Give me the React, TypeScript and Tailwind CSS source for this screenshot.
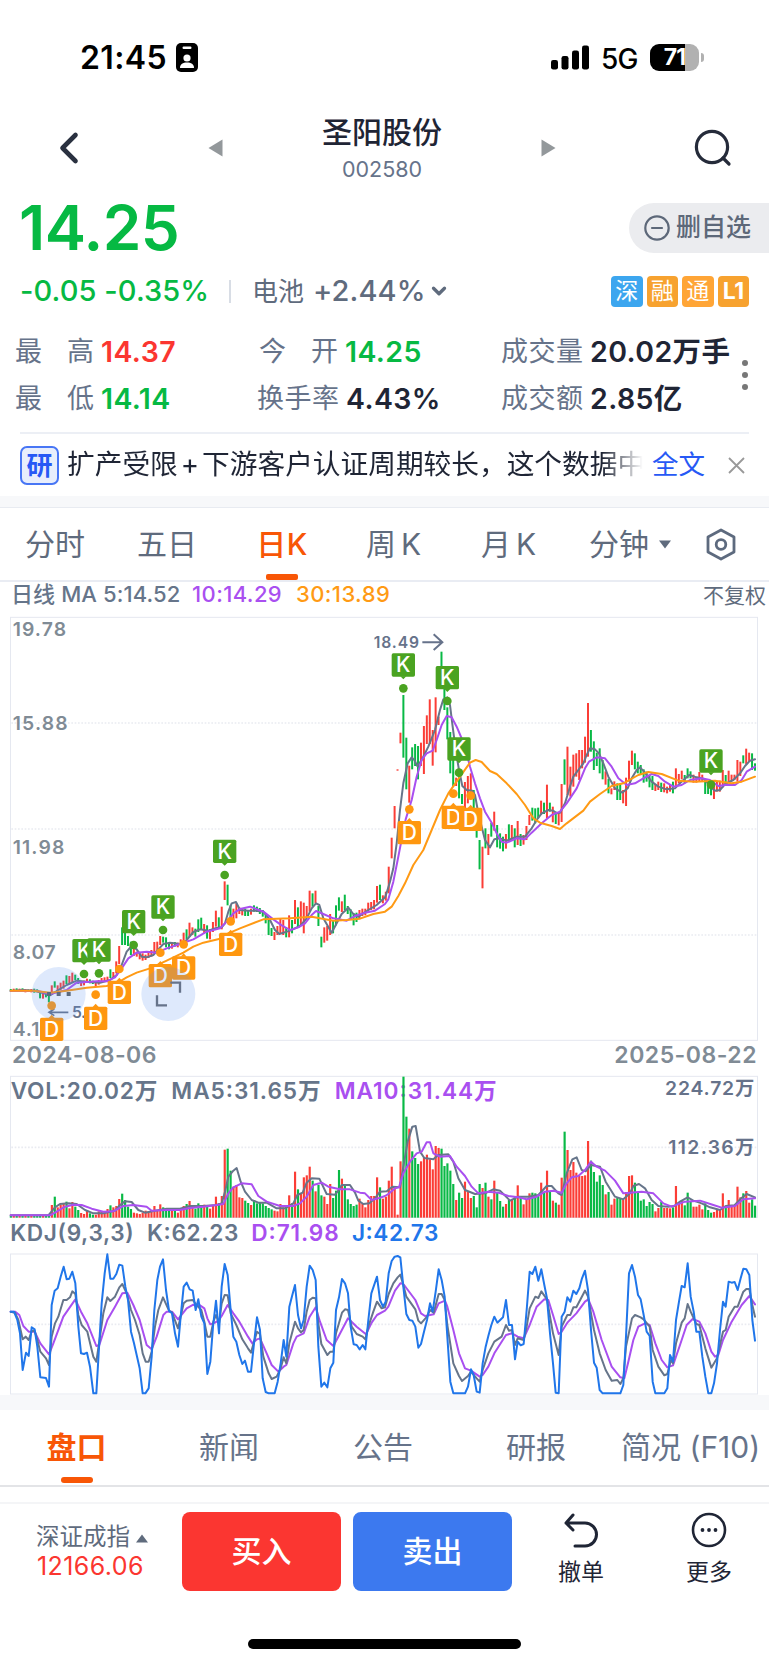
import { ChevronDown } from "lucide-react";

type Tone = "r" | "g";

const SLATE = "#66758a";
const PURPLE = "#a94ff0";
const ORANGE = "#ff9a14";
const RED = "#fb3d36";
const GREEN = "#08b945";
const BLUE = "#2076ea";

// chart units are 1/3 px, the series are stored in two halves
const HALF = 1155;
const STEP = 8.79;
const FIRST = 32.3;

const barX = (i: number) => FIRST + i * STEP;

const joinHalves = (
  left: string,
  right: string,
  leftDy = 0
) => {
  const shift = (src: string, dx: number, dy: number) =>
    src.split(" ").map((p) => {
      const [x, y] = p.split(",").map(Number);
      return `${x + dx},${y + dy}`;
    });
  return [
    ...shift(left, 0, leftDy),
    ...shift(right, HALF, 0),
  ].join(" ");
};

const CANDLES =
  "g1137-1145 r1136-1145 g1135-1146 r1136-1144 g1135-1145 r1137-1147 g1138-1146 r1137-1147 g1136-1148 g1138-1146 " +
  "g1145-1165 r1150-1166 g1146-1162 g1150-1177 r1126-1155 g1114-1133 r1126-1148 r1118-1140 r1112-1136 g1096-1122 " +
  "r1098-1124 r1088-1116 g1094-1110 g1104-1122 r1115-1128 r1112-1126 r1106-1118 g1108-1120 g1112-1122 r1116-1130 " +
  "r1110-1124 r1104-1118 r1102-1114 r1100-1116 g1078-1104 r1086-1104 r1054-1090 r1008-1062 g952-1005 g960-1005 " +
  "g978-1008 g995-1035 r1010-1038 r1025-1040 r1030-1048 r1030-1052 r1034-1050 r1026-1044 r1020-1040 r996-1030 " +
  "r995-1020 r978-1005 g980-998 g982-1012 g1000-1018 r996-1016 g996-1010 r998-1012 r988-1006 r968-995 " +
  "g958-988 r938-980 r952-975 g956-980 g928-966 g923-960 r942-970 g946-986 r958-988 r936-966 " +
  "r902-950 g922-956 r890-958 r814-870 g824-886 g886-925 r896-930 r880-925 r892-912 r894-916 " +
  "g896-918 g900-918 r896-914 g886-905 g890-906 g894-912 g900-920 g912-940 g930-975 g954-978 " +
  "r966-990 r948-975 r924-970 r930-975 g952-982 r916-982 g930-970 r870-942 g892-952 r874-945 " +
  "r878-970 r888-922 r842-905 g850-890 r842-880 g888-948 g980-1012 r952-998 r948-992 r912-975 " +
  "g930-970 g886-946 g862-902 r874-906 g854-900 g888-912 g898-928 g910-946 g908-936 r900-926 " +
  "r896-918 r896-916 r878-904 r876-900 r870-898 r828-878 g824-870 r856-880 r845-872 r770-850 " +
  "r683-745 r588-655 r478-482 r368-400 g255-443 g383-538 r467-578 g412-478 g402-468 g408-508 " +
  "r398-468 r348-492 r316-402 r268-402 r360-467 r262-427 r320-345 g125-200 g215-300 g292-388 " +
  "g366-490 g430-530 r503-528 g490-565 g552-582 r516-600 r498-580 r490-560 g540-640 g600-683 " +
  "g690-778 r710-835 g655-715 r672-735 g638-680 r605-662 g645-712 g670-716 g680-724 r672-716 " +
  "g643-695 r645-690 g655-712 r633-705 g672-708 r675-704 r648-690 r615-645 g593-632 g595-640 " +
  "g593-625 r572-615 g578-612 r524-625 g578-605 r590-637 g605-642 r610-646 r522-636 g448-524 " +
  "r410-555 r470-560 r434-530 r430-500 r420-510 r420-475 r380-458 r279-440 g360-425 g394-480 " +
  "g428-468 g415-490 g450-508 r484-524 g506-550 r535-553 r514-540 g520-570 g520-570 r540-580 " +
  "r503-588 r452-515 r422-465 g430-478 g455-490 g465-492 g478-518 g485-515 g495-532 g498-540 " +
  "r522-543 r515-540 g518-546 r520-547 r530-550 r525-545 g515-550 r475-530 r492-520 r482-508 " +
  "g495-520 g475-505 g484-505 r494-518 r500-518 r486-515 r494-515 g510-552 g515-552 g530-556 " +
  "r525-567 r515-545 r512-545 r480-532 g495-520 r482-515 r494-512 r494-510 r450-515 r455-498 " +
  "g436-460 r416-462 r428-455 g430-480 g460-482";

const candles = CANDLES.split(" ").map((c, i) => {
  const [top, bottom] = c.slice(1).split("-").map(Number);
  return { x: barX(i), tone: c[0] as Tone, top, bottom };
});

const volumeTops = [
  437, 438, 437, 438, 438, 437, 438, 438, 437, 437, 435, 437, 436, 435, 405, 380, 412, 405, 400, 395,
  415, 396, 410, 420, 429, 432, 420, 430, 434, 434, 424, 424, 427, 417, 406, 412, 408, 387, 371, 390,
  410, 417, 428, 430, 432, 428, 422, 424, 424, 408, 420, 403, 412, 418, 422, 422, 416, 428, 416, 408,
  402, 393, 412, 416, 400, 408, 404, 410, 416, 405, 380, 400, 378, 239, 236, 302, 350, 345, 382, 384,
  392, 399, 405, 390, 400, 398, 400, 408, 414, 418, 422, 424, 402, 412, 410, 376, 400, 305, 358, 370,
  322, 316, 290, 332, 364, 345, 376, 380, 402, 342, 384, 362, 300, 326, 345, 388, 402, 408, 404, 386,
  400, 412, 390, 378, 378, 322, 352, 386, 380, 332, 290, 352, 434, 274, 20, 140, 176, 244, 264, 282,
  274, 262, 254, 268, 298, 228, 234, 236, 288, 280, 302, 342, 390, 368, 384, 335, 366, 384, 378, 412,
  342, 354, 338, 380, 388, 332, 368, 393, 410, 402, 390, 390, 382, 346, 380, 403, 390, 370, 368, 370,
  378, 338, 366, 302, 366, 392, 398, 404, 323, 185, 240, 300, 276, 308, 318, 318, 316, 213, 272, 306,
  335, 316, 345, 373, 366, 404, 386, 384, 386, 390, 366, 318, 316, 338, 366, 392, 388, 408, 396, 402,
  424, 414, 396, 414, 414, 415, 412, 348, 396, 390, 406, 368, 396, 410, 410, 404, 418, 400, 420, 428,
  426, 420, 420, 370, 408, 390, 406, 406, 350, 382, 370, 363, 398, 388, 407,
];

const ma5 = joinHalves(
  "32,453 70,450 105,453 125,458 150,466 175,450 200,435 230,422 260,425 300,428 330,420 350,405 365,375 380,335 395,318 410,328 425,350 440,352 460,345 475,328 490,312 510,308 540,312 560,300 580,276 600,268 625,272 645,265 665,262 675,250 685,215 695,190 708,186 720,210 745,212 770,212 790,215 810,240 825,270 838,282 870,272 900,258 920,235 935,205 948,190 958,195 970,235 995,278 1010,250 1025,222 1045,203 1060,222 1075,230 1105,210 1130,195 1155,172",
  "5,848 15,815 25,775 35,700 45,600 55,520 68,460 80,442 88,450 97,468 110,450 130,410 150,360 165,300 175,268 187,262 195,285 203,350 212,420 222,480 232,528 245,540 262,542 270,555 280,610 290,650 300,690 315,712 328,688 345,685 365,692 395,680 420,680 440,655 455,630 470,610 490,600 505,602 515,610 525,608 540,580 555,530 565,500 580,480 595,460 605,435 615,415 630,418 642,430 655,460 670,500 690,535 712,548 728,535 740,505 755,480 765,472 780,488 800,515 820,530 845,538 870,535 890,515 912,495 935,502 960,508 975,530 990,542 1005,540 1020,522 1045,510 1065,490 1080,468 1095,452 1110,448",
  690
);

const ma10 = joinHalves(
  "32,453 110,452 150,462 200,450 230,428 290,424 320,424 345,412 365,385 385,355 410,338 440,335 470,338 500,325 540,312 580,298 620,275 660,265 680,245 700,220 720,207 750,200 790,215 820,238 845,256 870,270 895,262 915,250 935,225 948,213 970,222 1000,235 1040,242 1065,228 1095,218 1125,212 1155,192",
  "10,868 25,815 38,750 50,688 62,628 80,570 95,500 110,450 125,430 143,422 155,390 170,345 185,318 200,322 215,350 232,390 245,430 255,470 270,520 285,565 300,605 320,638 335,670 350,695 365,698 395,685 420,688 440,668 470,640 500,615 525,605 545,580 575,535 590,500 600,475 612,455 635,442 660,445 680,470 700,505 725,525 750,520 775,505 800,492 820,498 840,515 865,530 890,525 915,510 950,505 975,510 1000,528 1020,525 1050,525 1070,510 1085,485 1110,470",
  690
);

const ma30 = joinHalves(
  "32,452 100,452 150,458 200,452 260,443 320,438 350,430 380,412 410,398 450,385 500,362 550,338 580,320 610,308 660,296 685,280 720,265 790,238 870,235 935,230 1000,242 1040,240 1080,236 1120,222 1155,215",
  "20,890 40,858 60,820 85,765 115,720 140,660 165,600 190,550 225,500 255,458 272,450 290,456 315,483 335,492 365,520 395,552 420,585 445,625 465,638 500,648 525,657 545,640 595,602 615,575 645,552 680,528 715,520 760,495 790,486 830,492 880,512 930,515 990,512 1040,520 1070,515 1110,500",
  690
);

const volMa5 = joinHalves(
  "32,436 145,436 165,412 180,402 205,400 230,402 255,420 280,430 310,430 345,422 360,405 375,394 395,396 415,420 435,428 465,422 500,416 540,416 570,408 610,408 650,405 665,400 675,365 685,320 700,302 710,294 722,335 735,365 755,390 775,398 800,398 830,415 855,415 880,400 892,375 908,368 920,338 935,325 958,326 980,372 1005,374 1015,362 1025,345 1050,345 1065,368 1075,392 1090,402 1108,400 1125,385 1140,365 1160,364",
  "10,360 22,350 45,352 55,290 68,215 82,170 92,168 105,245 118,264 145,268 160,255 190,253 205,275 220,325 240,360 270,372 300,370 325,358 345,362 375,392 400,380 430,380 460,375 485,348 500,348 520,370 530,375 545,310 562,268 575,262 590,300 602,304 618,285 645,290 662,335 690,380 715,388 735,370 745,348 762,342 780,355 800,390 820,408 850,410 868,408 885,395 908,382 925,392 950,400 975,412 1005,420 1022,408 1048,406 1065,388 1085,372 1110,382"
);

const volMa10 = joinHalves(
  "32,436 150,436 170,425 195,410 220,404 245,405 275,416 310,425 340,424 370,408 400,405 440,410 455,422 500,420 540,420 570,414 610,410 650,405 670,402 685,370 700,352 725,340 755,343 775,378 800,395 840,408 880,408 900,400 920,380 940,345 965,338 985,350 1020,358 1050,358 1080,368 1095,370 1115,390 1135,385 1155,378",
  "10,372 30,355 42,352 55,310 75,275 95,250 110,245 125,217 135,217 145,250 165,260 195,258 215,290 240,318 260,350 280,370 310,365 340,368 370,378 400,382 425,388 455,380 480,365 505,362 530,368 545,340 560,322 580,318 600,300 618,275 635,290 660,302 690,332 715,370 735,368 770,365 805,370 835,400 860,410 900,395 945,392 985,405 1010,413 1050,408 1075,388 1110,385"
);

const kdjJ = joinHalves(
  "32,725 42,725 52,750 60,790 68,900 78,848 86,858 95,772 104,778 112,830 121,922 138,924 147,950 155,705 164,662 173,655 182,620 191,590 200,628 208,626 217,605 226,640 235,770 243,850 252,852 261,848 270,890 280,970 289,970 296,850 305,700 314,610 322,553 331,626 340,626 349,612 358,584 367,587 376,650 384,690 393,785 402,820 419,895 428,970 436,970 446,955 455,860 463,720 472,630 480,590 489,568 498,660 507,722 516,730 525,790 534,830 542,740 551,650 560,638 569,658 578,662 587,720 595,688 604,740 613,760 622,912 631,875 639,770 648,692 657,790 665,650 674,582 683,615 692,720 700,800 709,815 718,855 727,882 735,872 744,905 753,905 762,820 771,742 780,780 788,925 797,966 806,970 824,970 833,935 842,880 851,810 859,860 868,710 877,675 885,645 894,735 903,775 911,750 920,650 929,587 938,600 947,630 955,830 964,950 973,938 982,952 991,895 1000,878 1008,720 1017,682 1026,627 1035,640 1044,670 1052,770 1061,823 1070,825 1079,838 1088,825 1096,838 1105,750 1114,670 1131,620 1140,690 1149,710 1157,695",
  "11,610 20,573 29,560 38,558 46,562 55,650 64,732 73,750 82,752 91,770 100,833 108,822 117,785 126,750 135,700 143,725 152,665 161,598 170,630 179,680 187,800 196,935 205,970 240,970 249,950 258,898 266,915 275,965 284,968 293,880 302,830 310,798 319,765 328,740 337,758 354,742 363,690 372,765 381,765 390,868 398,815 407,826 416,822 425,720 434,605 442,612 451,590 460,632 469,598 478,645 486,685 495,790 504,880 512,968 521,970 530,740 539,725 547,682 556,695 565,662 574,672 583,655 591,625 600,602 609,660 618,780 627,878 635,893 644,960 653,970 706,970 715,945 723,800 732,610 741,585 750,620 759,675 767,688 776,735 785,785 794,798 803,935 811,970 838,970 847,955 855,855 864,875 873,750 882,695 890,648 899,652 908,580 917,680 926,725 934,785 943,785 952,860 961,920 970,970 979,970 987,940 996,880 1005,780 1014,695 1022,710 1031,635 1040,638 1049,636 1058,660 1067,625 1075,596 1084,598 1093,615 1102,750 1110,812"
);

const kdjK = joinHalves(
  "32,725 45,728 55,750 68,808 77,800 86,810 95,783 104,783 112,810 121,845 138,865 147,885 155,800 165,760 175,740 190,690 200,690 210,682 217,664 226,672 235,735 245,765 262,785 280,860 289,875 300,800 310,730 322,682 331,693 345,680 358,652 367,642 380,670 393,720 405,750 419,795 428,850 437,875 446,875 455,845 465,770 475,720 489,682 507,722 516,728 534,775 551,700 560,692 578,690 590,705 604,720 613,755 622,800 631,800 640,755 648,735 657,760 665,700 674,675 683,676 692,730 709,765 727,808 744,835 753,848 762,815 771,785 780,792 790,860 806,910 815,927 830,920 842,895 851,862 859,880 868,820 885,755 894,775 903,787 911,780 920,725 929,690 938,683 947,685 955,760 964,822 982,855 991,845 1000,845 1008,790 1026,728 1035,718 1044,720 1055,770 1070,792 1088,800 1096,808 1105,770 1120,725 1131,695 1145,715 1155,712",
  "11,672 25,640 38,622 46,614 55,645 64,680 91,718 100,752 108,760 126,740 135,720 146,728 161,672 170,672 179,690 187,765 205,880 222,918 231,933 249,918 258,905 275,925 284,935 293,900 310,850 328,815 350,800 363,765 372,782 381,780 390,825 398,805 416,810 425,770 434,715 451,680 460,684 469,664 486,688 504,790 521,855 530,770 547,735 556,735 565,712 574,712 600,662 609,680 627,780 644,850 662,900 680,932 697,930 706,942 715,925 723,830 741,745 750,735 767,742 776,748 794,770 803,840 820,890 838,916 847,912 858,870 864,880 873,820 890,758 899,745 908,702 917,725 934,762 943,765 961,835 979,893 996,865 1014,785 1022,780 1031,740 1049,710 1058,710 1075,665 1084,657 1093,657 1102,705 1110,740"
);

const kdjD = joinHalves(
  "32,725 45,725 58,735 70,768 86,785 104,785 121,820 147,853 160,820 190,740 226,688 243,725 262,760 289,828 298,825 322,750 345,710 367,670 382,668 400,705 419,750 440,825 455,838 470,800 490,735 500,725 516,725 534,748 560,715 580,704 600,706 613,715 622,745 631,763 645,758 657,750 665,738 683,705 700,730 718,755 744,800 757,820 771,808 780,805 800,850 815,885 835,905 851,890 859,885 880,820 890,800 911,790 929,740 947,712 960,755 980,810 1000,828 1015,800 1044,745 1070,770 1098,793 1115,758 1131,735 1155,722",
  "10,710 30,662 46,640 55,642 91,690 108,730 120,738 146,733 161,700 180,692 187,710 205,780 222,850 240,895 258,902 284,920 293,915 310,890 328,850 350,815 363,795 381,790 398,800 416,805 434,765 455,710 478,688 490,690 504,735 521,792 530,785 547,758 574,730 600,695 610,688 625,725 650,810 680,890 706,922 718,925 730,875 745,810 760,770 780,760 794,765 811,820 830,870 847,892 864,886 885,825 905,765 923,747 943,755 961,790 979,845 990,860 1000,855 1014,810 1040,755 1070,705 1093,678 1110,703"
);

// [x, box top, dot y]
const kMarks = [
  [252, 987, 1092], [297, 985, 1090], [401, 900, 1005], [489, 856, 960], [674, 689, 795],
  [1210, 130, 235], [1342, 168, 273], [1377, 382, 488], [2133, 418, 524],
];
const dMarks = [
  [155, 1223, 1187], [287, 1190, 1154], [358, 1112, 1077], [481, 1062, 1028], [551, 1039, 1003],
  [692, 968, 934], [1228, 633, 598], [1360, 587, 551], [1412, 593, 557],
];

const Mark = ({ x, top, dot, kind }: { x: number; top: number; dot: number; kind: "K" | "D" }) => {
  const fill = kind === "K" ? "#4aa321" : "#ff970f";
  const tip =
    kind === "K"
      ? `${x - 9},${top + 69} ${x + 9},${top + 69} ${x},${top + 78}`
      : `${x - 9},${top + 1} ${x + 9},${top + 1} ${x},${top - 9}`;
  return (
    <g fill={fill}>
      <circle cx={x} cy={dot} r={13} />
      <rect x={x - 35} y={top} width={70} height={70} rx={5} />
      <polygon points={tip} />
      <text x={x} y={top + 57} textAnchor="middle" fontSize={63} fontWeight={500} fill="#fff">
        {kind}
      </text>
    </g>
  );
};

const Line = ({ points, color }: { points: string; color: string }) => (
  <polyline
    points={points}
    fill="none"
    stroke={color}
    strokeWidth={6}
    strokeLinejoin="round"
    strokeLinecap="round"
  />
);

const Grid = ({ ys }: { ys: number[] }) => (
  <g stroke="#e9ebf1" strokeWidth={5} strokeDasharray="5 5">
    {ys.map((y) => (
      <line key={y} x1={34} x2={2270} y1={y} y2={y} />
    ))}
  </g>
);

const Label = ({
  x,
  y,
  w,
  size,
  color,
  children,
}: {
  x: number;
  y: number;
  w: number;
  size: number;
  color: string;
  children: string;
}) => (
  <text x={x} y={y} fontSize={size} fontWeight={600} fill={color} textLength={w}>
    {children}
  </text>
);

const PriceChart = () => (
  <svg className="block h-[432px] w-full" viewBox="0 0 2307 1296">
    <rect x={31.5} y={22} width={2241} height={1269} fill="none" stroke="#e5e8f0" strokeWidth={3} />
    <Grid ys={[339, 657, 975]} />
    <Label x={38} y={77} w={160} size={58} color="#808b95">19.78</Label>
    <Label x={38} y={360} w={165} size={58} color="#808b95">15.88</Label>
    <Label x={38} y={731} w={155} size={58} color="#808b95">11.98</Label>
    <Label x={38} y={1048} w={129} size={58} color="#808b95">8.07</Label>
    <Label x={38} y={1278} w={80} size={58} color="#808b95">4.1</Label>

    {candles.map((c) => (
      <line
        key={c.x}
        x1={c.x}
        x2={c.x}
        y1={c.top}
        y2={c.bottom}
        stroke={c.tone === "r" ? RED : GREEN}
        strokeWidth={6}
      />
    ))}
    <Line points={ma5} color={SLATE} />
    <Line points={ma10} color={PURPLE} />
    <Line points={ma30} color={ORANGE} />

    <Label x={1121} y={113} w={136} size={47} color="#66728a">18.49</Label>
    <path d="M1267 97 H1326 M1301 73 L1327 97 L1301 120" fill="none" stroke="#66728a" strokeWidth={6} />
    <path d="M205 1207 H148 M163 1197 L147 1207 L163 1217" fill="none" stroke="#66728a" strokeWidth={5} />
    <Label x={216} y={1224} w={42} size={47} color="#66728a">5.</Label>

    {kMarks.map(([x, top, dot]) => (
      <Mark key={x} x={x} top={top} dot={dot} kind="K" />
    ))}
    {dMarks.map(([x, top, dot]) => (
      <Mark key={x} x={x} top={top} dot={dot} kind="D" />
    ))}

    <circle cx={176} cy={1152} r={81} fill="#5b8fef" fillOpacity={0.2} />
    <circle cx={505} cy={1152} r={81} fill="#5b8fef" fillOpacity={0.2} />
    <path d="M141 1152 h12 M170 1152 h12 M200 1152 h12" stroke="#5c6b80" strokeWidth={12} />
    <path d="M511 1118 H540 V1148 M471 1156 V1186 H501" fill="none" stroke="#66738a" strokeWidth={7} />
  </svg>
);

const VolumeChart = () => (
  <svg className="block h-[150px] w-full" viewBox="0 0 2307 450">
    <rect x={31.5} y={19} width={2241} height={423} fill="none" stroke="#e5e8f0" strokeWidth={3} />
    <Grid ys={[232]} />
    <Label x={32} y={87} w={440} size={68} color={SLATE}>VOL:20.02万</Label>
    <Label x={514} y={87} w={448} size={68} color={SLATE}>MA5:31.65万</Label>
    <Label x={1004} y={87} w={486} size={68} color={PURPLE}>MA10:31.44万</Label>
    <Label x={1995} y={75} w={268} size={58} color="#66728a">224.72万</Label>
    <Label x={2005} y={253} w={258} size={58} color="#66728a">112.36万</Label>
    {volumeTops.map((top, i) => (
      <rect
        key={i}
        x={barX(i) - 3}
        y={top}
        width={6.5}
        height={443 - top}
        fill={candles[i].tone === "r" ? RED : GREEN}
      />
    ))}
    <Line points={volMa5} color={SLATE} />
    <Line points={volMa10} color={PURPLE} />
  </svg>
);

const KdjChart = () => (
  <svg className="block h-[175px] w-full" viewBox="0 450 2307 525">
    <Label x={31} y={512} w={370} size={68} color={SLATE}>KDJ(9,3,3)</Label>
    <Label x={441} y={512} w={274} size={68} color={SLATE}>K:62.23</Label>
    <Label x={754} y={512} w={262} size={68} color={PURPLE}>D:71.98</Label>
    <Label x={1056} y={512} w={259} size={68} color={BLUE}>J:42.73</Label>
    <rect x={31.5} y={552} width={2241} height={420} fill="none" stroke="#e5e8f0" strokeWidth={3} />
    <Grid ys={[763]} />
    <Line points={kdjD} color={PURPLE} />
    <Line points={kdjK} color={SLATE} />
    <Line points={kdjJ} color={BLUE} />
  </svg>
);

const StatusBar = () => (
  <div className="flex h-[100px] items-start pl-[80px] pr-[65px] pt-[38px]">
    <span className="w-[96px] text-[32px] font-semibold leading-[40px] tracking-[0.4px] text-black">
      21:45
    </span>
    <svg className="mt-[5px] h-[29px] w-[22px]" viewBox="0 0 22 29">
      <rect width="22" height="29" rx="5" fill="#000" />
      <rect x="6.500" y="3.500" width="9" height="2.500" rx="1.200" fill="#fff" />
      <circle cx="11" cy="15" r="3.600" fill="#fff" />
      <path d="M4 25 c0-4 3-5.500 7-5.500 s7 1.500 7 5.500 z" fill="#fff" />
    </svg>
    <svg className="ml-auto mt-[7px] h-[25px] w-[40px]" viewBox="0 0 40 25">
      <rect x="1" y="15" width="7" height="9.500" rx="2.200" />
      <rect x="11.500" y="11" width="7" height="13.500" rx="2.200" />
      <rect x="22" y="5.500" width="7" height="19" rx="2.200" />
      <rect x="32" y="0.500" width="7" height="24" rx="2.200" />
    </svg>
    <span className="ml-[11px] w-[49px] whitespace-nowrap text-[28px] font-medium leading-[42px] tracking-[-0.8px] text-black">
      5G
    </span>
    <div className="mt-[6px] flex h-[27px] w-[49px] overflow-hidden rounded-[9px] bg-[linear-gradient(90deg,#000_71%,#b1b1b1_71%)]">
      <span className="w-full text-center text-[23px] font-bold leading-[27px] tracking-[-0.8px] text-white">
        71
      </span>
    </div>
    <div className="ml-[2px] mt-[15px] h-[9px] w-[3px] rounded-r-full bg-[#b1b1b1]" />
  </div>
);

const Header = () => (
  <header className="flex h-[96px] items-center">
    <svg className="ml-[55px] h-[36px] w-[24px]" viewBox="0 0 24 36" fill="none" stroke="#2a3140" strokeWidth="4.600" strokeLinecap="round" strokeLinejoin="round">
      <path d="M20.500 5 L7.500 18 L20.500 31" />
    </svg>
    <svg className="ml-[129px] h-[18px] w-[15px]" viewBox="0 0 15 18">
      <path d="M0.500 9 L14.500 0.500 V17.500 z" fill="#93989b" />
    </svg>
    <div className="ml-[58px] flex w-[202px] flex-col items-center pt-[2px]">
      <h1 className="text-[30px] font-medium leading-[38px] text-[#1f2535]">圣阳股份</h1>
      <p className="pt-[2px] text-[21.500px] leading-[32px] text-[#66738a]">002580</p>
    </div>
    <svg className="ml-[58px] h-[18px] w-[15px]" viewBox="0 0 15 18">
      <path d="M14.500 9 L0.500 0.500 V17.500 z" fill="#93989b" />
    </svg>
    <svg className="ml-[138px] h-[38px] w-[38px]" viewBox="0 0 38 38" fill="none" stroke="#252b3a" strokeWidth="3.200" strokeLinecap="round">
      <circle cx="18" cy="18" r="15.600" />
      <path d="M29 29 L35 35" />
    </svg>
  </header>
);

const tags = [
  { text: "深", cls: "bg-[#3ca6ef]" },
  { text: "融", cls: "bg-[#f7a22f]" },
  { text: "通", cls: "bg-[#ffa536]" },
  { text: "L1", cls: "bg-[#f7a22f] font-bold tracking-[-0.5px]" },
];

const Quote = () => (
  <section className="h-[130px]">
    <div className="flex h-[64px] items-center">
      <span className="pl-[19px] text-[62px] font-semibold leading-[64px] tracking-[-0.5px] text-[#06b943]">
        14.25
      </span>
      <button className="ml-auto flex h-[50px] w-[140px] items-center rounded-l-full bg-[#ebecef] pl-[15px]">
        <svg className="h-[26px] w-[26px]" viewBox="0 0 26 26" fill="none" stroke="#5d6879" strokeWidth="2.200" strokeLinecap="round">
          <circle cx="13" cy="13" r="11.700" />
          <path d="M8 13 H18" />
        </svg>
        <span className="ml-[6px] text-[25px] font-medium text-[#5d6879]">删自选</span>
      </button>
    </div>
    <div className="flex h-[62px] items-center text-[29px]">
      <span className="w-[209px] whitespace-nowrap pl-[20px] font-medium tracking-[0.1px] text-[#06b943]">
        -0.05 -0.35%
      </span>
      <span className="ml-[20px] h-[23px] w-[2px] bg-[#d8dde5]" />
      <span className="ml-[21px] text-[26px] text-[#5f6b7d]">电池</span>
      <span className="ml-[9px] w-[112px] font-medium tracking-[0.1px] text-[#5f6b7d]">+2.44%</span>
      <ChevronDown className="ml-[3px] text-[#5f6b7d]" size={22} strokeWidth={3.6} />
      <div className="ml-auto mr-[20px] flex gap-[4px]">
        {tags.map((t) => (
          <span
            key={t.text}
            className={`flex h-[31px] w-[31.500px] items-center justify-center rounded-[4px] text-[23px] text-white ${t.cls}`}
          >
            {t.text}
          </span>
        ))}
      </div>
    </div>
  </section>
);

const stats = [
  [
    { label: "最高", value: "14.37", tone: "text-[#fb3630]", box: "w-[79px]" },
    { label: "今开", value: "14.25", tone: "text-[#06b943]", box: "w-[81px] pl-[2px]" },
    { label: "成交量", value: "20.02万手", tone: "text-[#1f2535]", box: "w-[82px]" },
  ],
  [
    { label: "最低", value: "14.14", tone: "text-[#06b943]", box: "w-[79px]" },
    { label: "换手率", value: "4.43%", tone: "text-[#1f2535]", box: "w-[82px]" },
    { label: "成交额", value: "2.85亿", tone: "text-[#1f2535]", box: "w-[82px]" },
  ],
];

const Stats = () => (
  <section className="flex h-[109px] items-start pl-[15px]">
    <div className="flex flex-col">
      {stats.map((row) => (
        <div key={row[0].label} className="grid h-[47px] grid-cols-[242px_244px_239px] items-center">
          {row.map((s) => (
            <div key={s.label} className="flex items-center whitespace-nowrap">
              <span className={`flex justify-between text-[27px] text-[#66738a] ${s.box}`}>
                {s.label.split("").map((ch) => (
                  <span key={ch}>{ch}</span>
                ))}
              </span>
              <span className={`ml-[7px] text-[28.500px] font-semibold tracking-[0.4px] ${s.tone}`}>
                {s.value}
              </span>
            </div>
          ))}
        </div>
      ))}
    </div>
    <div className="mt-[31px] flex w-[10px] flex-col items-center gap-[6px]">
      <i className="h-[6px] w-[6px] rounded-full bg-[#777]" />
      <i className="h-[6px] w-[6px] rounded-full bg-[#777]" />
      <i className="h-[6px] w-[6px] rounded-full bg-[#777]" />
    </div>
  </section>
);

const Notice = () => (
  <section className="mx-[20px] flex h-[64px] items-center border-t-2 border-[#eceff5]">
    <span className="flex h-[39px] w-[39px] items-center justify-center rounded-[7px] border-2 border-[#4876f5] bg-[#e8eefc] text-[26px] font-bold text-[#2759f5]">
      研
    </span>
    <p className="ml-[8px] w-[576px] overflow-hidden whitespace-nowrap text-[27.700px] text-[#1f2535] [mask-image:linear-gradient(90deg,#000_93%,transparent)]">
      扩产受限<span className="px-[3px]">+</span>下游客户认证周期较长，这个数据中
    </p>
    <span className="ml-[9px] text-[26.500px] text-[#2759f5]">全文</span>
    <svg className="ml-auto mr-[4px] h-[17px] w-[17px]" viewBox="0 0 17 17" stroke="#999" strokeWidth="1.800">
      <path d="M1 1 L16 16 M16 1 L1 16" />
    </svg>
  </section>
);

const Periods = () => (
  <nav className="flex h-[74px] border-b-2 border-[#e9ecf3] text-[30px] text-[#5f6b7d]">
    <span className="ml-[25px] w-[112px] leading-[73px]">分时</span>
    <span className="w-[120px] leading-[73px]">五日</span>
    <span className="flex w-[50px] flex-col items-center whitespace-nowrap font-medium leading-[67px] text-[#f85606]">
      <span className="h-[66px] pt-[3px] tracking-[0.5px]">日K</span>
      <i className="h-[6px] w-[32px] shrink-0 rounded-[2px] bg-[#f85606]" />
    </span>
    <span className="ml-[59px] w-[115px] leading-[73px]">周<span className="pl-[5px]">K</span></span>
    <span className="w-[108px] leading-[73px]">月<span className="pl-[5px]">K</span></span>
    <span className="leading-[73px]">分钟</span>
    <svg className="ml-[10px] mt-[32px] h-[9px] w-[12px]" viewBox="0 0 12 9">
      <path d="M0 0.500 H12 L6 8.500 z" fill="#5f6b7d" />
    </svg>
    <svg className="ml-[34px] mt-[20px] h-[33px] w-[32px]" viewBox="0 0 32 33" fill="none" stroke="#5d6a7e" strokeWidth="2.800" strokeLinejoin="round">
      <path d="M16 2 L29 9 V24 L16 31 L3 24 V9 z" />
      <circle cx="16" cy="16.500" r="4.800" />
    </svg>
  </nav>
);

const MaLegend = () => (
  <div className="flex h-[28px] items-center whitespace-nowrap pb-[3px] text-[22px] font-medium leading-[25px] tracking-[0.4px] text-[#66758a]">
    <span className="ml-[11px] w-[181px] tracking-[0.1px]">日线 MA 5:14.52</span>
    <span className="w-[104px] text-[#a94ff0]">10:14.29</span>
    <span className="text-[#ff9a14]">30:13.89</span>
    <span className="ml-auto mr-[3px] pt-[2px] text-[21px] font-normal tracking-normal text-[#5f6b7d]">不复权</span>
  </div>
);

const InfoTabs = () => (
  <nav className="flex h-[77px] border-b-2 border-[#e3e4e7] text-[30px] text-[#66738a]">
    <span className="ml-[46px] flex w-[61px] flex-col items-center font-bold text-[#f85606]">
      <span className="h-[67px] leading-[75px]">盘口</span>
      <i className="h-[6px] w-[32px] rounded-full bg-[#f85606]" />
    </span>
    <span className="ml-[92px] w-[154px] leading-[75px]">新闻</span>
    <span className="w-[153px] leading-[75px]">公告</span>
    <span className="w-[115px] leading-[75px]">研报</span>
    <span className="whitespace-nowrap leading-[75px]">简况 (F10)</span>
  </nav>
);

const TradeBar = () => (
  <footer className="flex h-[137px] border-t-2 border-[#f4f5f7]">
    <div className="w-[182px] pt-[17px]">
      <div className="flex items-center pl-[36px] text-[23.500px] leading-[32px] text-[#5f6b7d]">
        深证成指
        <svg className="ml-[6px] mt-[2px] h-[9px] w-[12px]" viewBox="0 0 12 9">
          <path d="M0 8.500 H12 L6 0.500 z" fill="#5f6b7d" />
        </svg>
      </div>
      <div className="pl-[37px] text-[25px] leading-[26px] tracking-[0.4px] text-[#fb3630]">12166.06</div>
    </div>
    <button className="mt-[8px] h-[79px] w-[159px] rounded-[8px] bg-[#fb3631] text-[30px] font-medium text-white">
      买入
    </button>
    <button className="ml-[12px] mt-[8px] h-[79px] w-[159px] rounded-[8px] bg-[#3c79ef] text-[30px] font-medium text-white">
      卖出
    </button>
    <div className="ml-[29px] flex w-[80px] flex-col items-center pt-[8px] text-[#1f2535]">
      <svg className="h-[36px] w-[36px]" viewBox="0 0 36 36" fill="none" stroke="#1f2535" strokeWidth="3" strokeLinecap="round" strokeLinejoin="round">
        <path d="M10 3 L3 11 L10 18 M3 11 H22 A11.500 11.500 0 0 1 22 34 H12" />
      </svg>
      <span className="pt-[7px] text-[23px] leading-[34px]">撤单</span>
    </div>
    <div className="ml-[48px] flex w-[80px] flex-col items-center pt-[8px] text-[#1f2535]">
      <svg className="h-[36px] w-[36px]" viewBox="0 0 36 36" fill="none" stroke="#1f2535" strokeWidth="2.600">
        <circle cx="18" cy="18" r="16" />
        <g fill="#1f2535" stroke="none">
          <circle cx="11.500" cy="18" r="1.900" />
          <circle cx="18" cy="18" r="1.900" />
          <circle cx="24.500" cy="18" r="1.900" />
        </g>
      </svg>
      <span className="pt-[7px] text-[23px] leading-[34px]">更多</span>
    </div>
  </footer>
);

const App = () => (
  <div className="h-[1665px] w-[769px] overflow-hidden bg-white font-['Inter','Noto_Sans_CJK_SC',sans-serif]">
    <StatusBar />
    <Header />
    <Quote />
    <div className="h-[3px]" />
    <Stats />
    <div className="-mt-[6px]">
      <Notice />
    </div>
    <div className="h-[12px] border-b border-[#e8ebf1] bg-[#f7f8fa]" />
    <Periods />
    <MaLegend />
    <PriceChart />
    <div className="flex h-[28px] items-center justify-between px-[12px] pb-px text-[23px] font-semibold tracking-[0.5px] text-[#808b95]">
      <span>2024-08-06</span>
      <span>2025-08-22</span>
    </div>
    <VolumeChart />
    <KdjChart />
    <div className="h-[15px] bg-[#f7f8fa]" />
    <InfoTabs />
    <div className="h-[15px]" />
    <TradeBar />
    <div className="mx-auto h-[10px] w-[273px] rounded-full bg-black" />
  </div>
);

export default App;
